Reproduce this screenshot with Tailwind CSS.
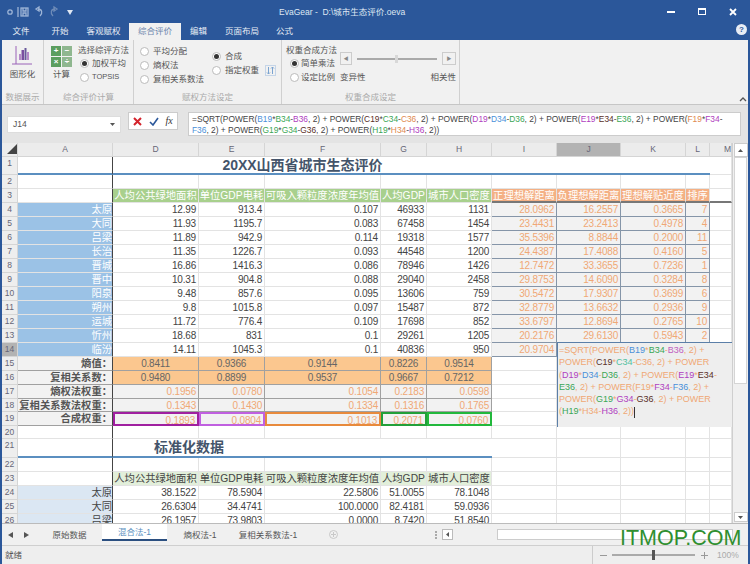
<!DOCTYPE html>
<html lang="zh-CN">
<head>
<meta charset="UTF-8">
<title>EvaGear</title>
<script src="https://cdn.jsdelivr.net/npm/@tailwindcss/browser@4"></script>
</head>
<body class="w-[750px] h-[564px] overflow-hidden bg-[#f1f1f1] text-[#555] font-['Liberation_Sans','Noto_Sans_CJK_SC',sans-serif]">
<div class="relative flex flex-col w-[750px] h-[564px] overflow-hidden border-x-2 border-[#2b579a]">

  <!-- title bar -->
  <div class="-mx-[2px] h-[23px] shrink-0 bg-[#2b579a] flex items-center text-white">
    <svg class="shrink-0" width="76" height="14" viewBox="0 0 76 14" fill="none" stroke="#9db4d6" stroke-width="1.3">
      <circle cx="10" cy="7" r="2.2"/>
      <path d="M18 2v10"/>
      <rect x="21" y="3" width="7" height="8"/><path d="M23 3v3h3V3M23 11V8h3v3"/>
      <path d="M36 4l3-2v4zM38 4c4 0 5 4 2 7"/>
      <path d="M57 4l-3-2v4zM55 4c-4 0-5 4-2 7" stroke="#6f8cb8"/>
      <path d="M67 5h6l-3 5z" fill="#dfe7f3" stroke="none"/>
    </svg>
    <div class="ml-[203px] text-[8.5px] leading-[16px] text-[#dfe7f3] whitespace-nowrap">EvaGear -&nbsp; D:\城市生态评价.oeva</div>
    <div class="ml-auto w-[8px] h-[2px] bg-white"></div>
    <div class="ml-[23px] w-[8px] h-[7px] border border-white border-t-2"></div>
    <svg class="ml-[23px] mr-[13px]" width="8" height="8" viewBox="0 0 8 8" stroke="#fff" stroke-width="1.8"><path d="M1 1l6 6M7 1l-6 6"/></svg>
  </div>

  <!-- menu tabs -->
  <div class="-mx-[2px] h-[17px] shrink-0 bg-[#2b579a] flex items-center text-[8.5px] leading-[17px] text-[#e8edf5]">
    <div class="w-[42px] text-center">文件</div>
    <div class="w-[36px] text-center">开始</div>
    <div class="w-[51px] text-center">客观赋权</div>
    <div class="w-[52px] h-[17px] text-center bg-[#f1f1f1] text-[#6d86ad]">综合评价</div>
    <div class="w-[35px] text-center">编辑</div>
    <div class="w-[52px] text-center">页面布局</div>
    <div class="w-[33px] text-center">公式</div>
    <div class="ml-auto mr-[3px] -mt-[5px] w-[11px] h-[11px] rounded-full bg-[#e8edf5] text-[#2b579a] text-[8px] leading-[11px] font-bold text-center">?</div>
  </div>

  <!-- ribbon -->
  <div class="h-[65px] shrink-0 bg-[#f1f1f1] flex border-b border-[#c6c6c6] text-[8.5px] leading-[12px]">
    <div class="w-[42px] flex flex-col items-center border-r border-[#d0d0d0]">
      <div class="flex-1 flex flex-col items-center pt-[6px]">
        <svg width="20" height="19" viewBox="0 0 20 19"><path d="M4 0v18M0 18h20" stroke="#9a63b8" stroke-width="1" fill="none"/><rect x="7" y="8" width="2" height="6" fill="#b58ac9"/><rect x="9.500" y="4" width="2.500" height="10" fill="#7a4fa0"/><rect x="12.500" y="2" width="2" height="12" fill="#6a5a9c"/><rect x="15" y="6" width="2" height="8" fill="#b58ac9"/></svg>
        <div class="mt-[3px]">图形化</div>
      </div>
      <div class="h-[13px] text-[#aaa]">数据展示</div>
    </div>

    <div class="w-[90px] flex flex-col border-r border-[#d0d0d0]">
      <div class="flex-1 flex pl-[7px]">
        <div class="w-[21px] pt-[6px] flex flex-col items-center">
          <div class="grid grid-cols-2 gap-[1px] w-[21px] text-white text-[8px] leading-[10px] text-center font-bold">
            <div class="h-[10px] bg-[#5b9e5f]">+</div><div class="h-[10px] bg-[#8fb78f]">−</div>
            <div class="h-[10px] bg-[#5b9e5f]">×</div><div class="h-[10px] bg-[#8fb78f]">÷</div>
          </div>
          <div class="mt-[1px]">计算</div>
        </div>
        <div class="ml-[6px] pt-[4px] whitespace-nowrap">
          <div>选择综评方法</div>
          <div class="ml-[2px] flex items-center gap-[3px] h-[14px]"><span class="w-[9px] h-[9px] rounded-full border border-[#bbb] bg-white flex items-center justify-center"><span class="w-[5px] h-[5px] rounded-full bg-[#333]"></span></span>加权平均</div>
          <div class="ml-[2px] flex items-center gap-[3px] h-[14px]"><span class="w-[9px] h-[9px] rounded-full border border-[#bbb] bg-white"></span><span class="text-[7.5px]">TOPSIS</span></div>
        </div>
      </div>
      <div class="h-[13px] text-center text-[#aaa]">综合评价计算</div>
    </div>

    <div class="w-[148px] flex flex-col border-r border-[#d0d0d0]">
      <div class="flex-1 flex pl-[6px] whitespace-nowrap">
        <div class="w-[72px] pt-[4px]">
          <div class="flex items-center gap-[4px] h-[14px]"><span class="w-[9px] h-[9px] rounded-full border border-[#bbb] bg-white"></span>平均分配</div>
          <div class="flex items-center gap-[4px] h-[14px]"><span class="w-[9px] h-[9px] rounded-full border border-[#bbb] bg-white"></span>熵权法</div>
          <div class="flex items-center gap-[4px] h-[14px]"><span class="w-[9px] h-[9px] rounded-full border border-[#bbb] bg-white"></span>复相关系数法</div>
        </div>
        <div class="pt-[9px]">
          <div class="flex items-center gap-[4px] h-[14px]"><span class="w-[9px] h-[9px] rounded-full border border-[#bbb] bg-white flex items-center justify-center"><span class="w-[5px] h-[5px] rounded-full bg-[#333]"></span></span>合成</div>
          <div class="flex items-center gap-[4px] h-[14px]"><span class="w-[9px] h-[9px] rounded-full border border-[#bbb] bg-white"></span>指定权重
            <svg class="ml-[2px]" width="11" height="11" viewBox="0 0 11 11" fill="none" stroke="#7aa3d0"><rect x="0.500" y="0.500" width="10" height="10" stroke="#c5d5e8"/><path d="M3.500 2v7M2 7.500l1.500 1.500L5 7.500M7.500 9V2M6 3.500L7.500 2 9 3.500"/></svg>
          </div>
        </div>
      </div>
      <div class="h-[13px] text-center text-[#aaa]">赋权方法设定</div>
    </div>

    <div class="w-[178px] flex flex-col border-r border-[#d0d0d0]">
      <div class="flex-1 flex whitespace-nowrap">
        <div class="w-[58px] pl-[4px] pt-[4px]">
          <div>权重合成方法</div>
          <div class="ml-[4px] flex items-center gap-[2px] h-[14px]"><span class="w-[9px] h-[9px] rounded-full border border-[#bbb] bg-white flex items-center justify-center"><span class="w-[5px] h-[5px] rounded-full bg-[#333]"></span></span>简单乘法</div>
          <div class="ml-[4px] flex items-center gap-[2px] h-[14px]"><span class="w-[9px] h-[9px] rounded-full border border-[#bbb] bg-white"></span>设定比例</div>
        </div>
        <div class="w-[116px] pt-[12px]">
          <div class="flex items-center h-[13px]">
            <div class="w-[12px] h-[13px] border border-[#ccc] text-[#888] text-[5px] leading-[11px] text-center">◀</div>
            <div class="relative flex-1 mx-[5px] h-[2px] bg-[#aaa]"><div class="absolute left-[38px] -top-[3px] w-[3px] h-[8px] bg-[#d8d8d8]"></div></div>
            <div class="w-[14px] h-[13px] border border-[#ccc] text-[#888] text-[5px] leading-[11px] text-center">▶</div>
          </div>
          <div class="mt-[5px] flex justify-between leading-[14px]"><span>变异性</span><span>相关性</span></div>
        </div>
      </div>
      <div class="h-[13px] text-center text-[#aaa]">权重合成设定</div>
    </div>

    <div class="flex-1 flex items-end justify-end pr-[1px] pb-[2px]">
      <svg width="8" height="6" viewBox="0 0 8 6" fill="none" stroke="#555" stroke-width="1.300"><path d="M1 5l3-3 3 3"/></svg>
    </div>
  </div>

  <!-- formula bar -->
  <div class="h-[38px] shrink-0 bg-[#e4e4e4] flex items-start pl-[5px]">
    <div class="mt-[11px] w-[114px] h-[17px] bg-white border border-[#ddd] text-[8.5px] leading-[15px] pl-[5px] pr-[5px] flex justify-between"><span>J14</span><svg class="mt-[6px]" width="5" height="3" viewBox="0 0 5 3"><path d="M0 0h5L2.500 3z" fill="#555"/></svg></div>
    <div class="ml-[7px] mt-[7px] w-[50px] h-[18px] bg-white border border-[#ccc] flex items-center justify-around px-[1px]">
      <svg width="9" height="9" viewBox="0 0 9 9" stroke="#d4232c" stroke-width="2"><path d="M1 1l7 7M8 1l-7 7"/></svg>
      <svg width="10" height="9" viewBox="0 0 10 9" fill="none" stroke="#2b579a" stroke-width="1.600"><path d="M1 5l3 3 5-7"/></svg>
      <span class="font-['Liberation_Serif'] italic text-[10px] leading-[12px] text-[#333]">fx</span>
    </div>
    <div class="ml-[10px] mt-[7px] w-[553px] h-[24px] bg-white border border-[#ccc] pl-[3px] pt-[1px] text-[8.4px] leading-[11px] text-[#444] whitespace-nowrap overflow-hidden">
      <div>=SQRT(POWER(<span class="text-[#4a90d9]">B19</span>*<span class="text-[#3aa655]">B34</span>-<span class="text-[#b040c0]">B36</span>, 2) + POWER(<span class="text-[#5a3028]">C19</span>*<span class="text-[#3aa655]">C34</span>-<span class="text-[#e08a50]">C36</span>, 2) + POWER(<span class="text-[#b040c0]">D19</span>*<span class="text-[#4a90d9]">D34</span>-<span class="text-[#3aa655]">D36</span>, 2) + POWER(<span class="text-[#b040c0]">E19</span>*<span class="text-[#5a3028]">E34</span>-<span class="text-[#3aa655]">E36</span>, 2) + POWER(<span class="text-[#e08a50]">F19</span>*<span class="text-[#b040c0]">F34</span>-</div>
      <div><span class="text-[#4a90d9]">F36</span>, 2) + POWER(<span class="text-[#3aa655]">G19</span>*<span class="text-[#3aa655]">G34</span>-<span class="text-[#5a3028]">G36</span>, 2) + POWER(<span class="text-[#3aa655]">H19</span>*<span class="text-[#e08a50]">H34</span>-<span class="text-[#b040c0]">H36</span>, 2))</div>
    </div>
  </div>

  <!-- sheet + vertical scrollbar -->
  <div class="h-[380px] shrink-0 flex bg-white overflow-hidden">
    <div class="relative w-[730px] overflow-hidden">
      <div id="sheet" class="grid grid-cols-[16px_95px_86px_66px_116px_46px_65px_65px_64px_65px_24px_22px] grid-rows-[14px_18px_14px_14px_14px_14px_14px_14px_14px_14px_14px_14px_14px_14px_14px_14px_14px_14px_13px_14px_13px_19px_14px_14px_14px_14px_14px]"></div>
      <!-- cell editor open on J14 -->
      <div class="absolute left-[555px] top-[199px] w-[175px] h-[85px] bg-[#eeeeee] border-l border-t border-[#5b7fa8] pl-[1px] pt-[1px] text-[9px] leading-[12.3px] text-[#f0a875] whitespace-nowrap">
        <div>=SQRT(POWER(<span class="text-[#4a90d9]">B19</span>*<span class="text-[#3aa655]">B34</span>-<span class="text-[#c060c0]">B36</span>, 2) +</div>
        <div>POWER(<span class="text-[#5a3028]">C19</span>*<span class="text-[#50c0a0]">C34</span>-C36, 2) + POWER</div>
        <div>(<span class="text-[#b040c0]">D19</span>*<span class="text-[#4a90d9]">D34</span>-<span class="text-[#3aa655]">D36</span>, 2) + POWER(<span class="text-[#b040c0]">E19</span>*<span class="text-[#5a3028]">E34</span>-</div>
        <div><span class="text-[#3aa655]">E36</span>, 2) + POWER(F19*<span class="text-[#b040c0]">F34</span>-<span class="text-[#4a90d9]">F36</span>, 2) +</div>
        <div>POWER(<span class="text-[#3aa655]">G19</span>*<span class="text-[#b040c0]">G34</span>-<span class="text-[#5a3028]">G36</span>, 2) + POWER</div>
        <div>(<span class="text-[#3aa655]">H19</span>*H34-<span class="text-[#b040c0]">H36</span>, 2))<span class="inline-block w-[1px] h-[11px] bg-[#333] align-middle"></span></div>
      </div>
    </div>
    <div class="w-[16px] bg-[#f0f0f0] border-l border-[#cfcfcf] flex flex-col items-center">
      <div class="w-[14px] h-[14px] bg-white border border-[#ccc] flex items-center justify-center"><svg width="5" height="3" viewBox="0 0 5 3"><path d="M0 3h5L2.500 0z" fill="#555"/></svg></div>
      <div class="w-[13px] h-[227px] bg-white border border-[#d5d5d5]"></div>
      <div class="flex-1"></div>
      <div class="w-[14px] h-[10px] mb-[1px] bg-white border border-[#ccc] flex items-center justify-center"><svg width="5" height="3" viewBox="0 0 5 3"><path d="M0 0h5L2.500 3z" fill="#555"/></svg></div>
    </div>
  </div>

  <!-- sheet tabs -->
  <div class="h-[22px] shrink-0 bg-[#f0f0f0] border-t border-[#bbb] flex items-center text-[8.5px] leading-[12px] text-[#555] whitespace-nowrap">
    <svg class="ml-[6px]" width="5" height="6" viewBox="0 0 5 6"><path d="M5 0v6L0 3z" fill="#555"/></svg>
    <svg class="ml-[11px]" width="5" height="6" viewBox="0 0 5 6"><path d="M0 0v6l5-3z" fill="#555"/></svg>
    <div class="w-[65px] ml-[8px] text-center">原始数据</div>
    <div class="w-[65px] h-[17px] self-start leading-[16px] text-center bg-white text-[#5b8fc0] border-b-2 border-[#2b4f80]">混合法-1</div>
    <div class="w-[66px] text-center">熵权法-1</div>
    <div class="w-[70px] text-center">复相关系数法-1</div>
    <svg class="ml-[26px] shrink-0" width="9" height="9" viewBox="0 0 9 9" fill="none" stroke="#c8c8c8"><circle cx="4.500" cy="4.500" r="4"/><path d="M4.500 2v5M2 4.500h5"/></svg>
    <div class="ml-[97px] w-[2px] h-[8px] border-l-2 border-dotted border-[#aaa]"></div>
    <div class="ml-[5px] w-[11px] h-[11px] bg-white border border-[#bbb] flex items-center justify-center"><svg width="3" height="5" viewBox="0 0 3 5"><path d="M3 0v5L0 2.500z" fill="#555"/></svg></div>
    <div class="ml-[44px] w-[236px] h-[11px] bg-white border border-[#ccc]"></div>
  </div>

  <!-- status bar -->
  <div class="flex-1 bg-[#eeeeee] border-t border-[#cfcfcf] text-[8.5px] flex items-center pl-[3px]">
    <span>就绪</span>
    <div class="ml-auto w-[156px] h-full border-l border-[#ccc] flex items-center">
      <div class="ml-[7px] w-[7px] h-[1px] bg-[#999]"></div>
      <div class="relative ml-[5px] w-[83px] h-[2px] bg-[#aaa]"><div class="absolute left-[40px] -top-[4px] w-[3px] h-[10px] bg-[#555]"></div></div>
      <svg class="ml-[6px]" width="7" height="7" viewBox="0 0 7 7" stroke="#999"><path d="M3.500 0v7M0 3.500h7"/></svg>
      <span class="ml-[9px] text-[#aaa]">100%</span>
    </div>
  </div>

  <!-- watermark lying over the bottom right corner -->
  <div class="absolute left-[618px] top-[526px] text-[21.5px] leading-[24px] text-[#2f8f2f] whitespace-nowrap">ITMOP.COM</div>
</div>

<script>
  const cities = ["太原","大同","吕梁","长治","晋城","晋中","阳泉","朔州","运城","忻州","临汾"];
  const raw = [
    ["12.99","913.4","0.107","46933","1131","28.0962","16.2557","0.3665","7"],
    ["11.93","1195.7","0.083","67458","1454","23.4431","23.2413","0.4978","4"],
    ["11.89","942.9","0.114","19318","1577","35.5396","8.8844","0.2000","11"],
    ["11.35","1226.7","0.093","44548","1200","24.4387","17.4088","0.4160","5"],
    ["16.86","1416.3","0.086","78946","1426","12.7472","33.3655","0.7236","1"],
    ["10.31","904.8","0.088","29040","2458","29.8753","14.6090","0.3284","8"],
    ["9.48","857.6","0.095","13606","759","30.5472","17.9307","0.3699","6"],
    ["9.8","1015.8","0.097","15487","872","32.8779","13.6632","0.2936","9"],
    ["11.72","776.4","0.109","17698","852","33.6797","12.8694","0.2765","10"],
    ["18.68","831","0.1","29261","1205","20.2176","29.6130","0.5943","2"],
    ["14.11","1045.3","0.1","40836","950","20.9704","","",""],
  ];
  const heads = ["人均公共绿地面积","单位GDP电耗","可吸入颗粒度浓度年均值","人均GDP","城市人口密度"];
  const heads2 = ["正理想解距离","负理想解距离","理想解贴近度","排序"];
  const weights = {
    15: ["熵值：", "0.8411","0.9366","0.9144","0.8226","0.9514"],
    16: ["复相关系数：", "0.9480","0.8899","0.9537","0.9667","0.7212"],
    17: ["熵权法权重：", "0.1956","0.0780","0.1054","0.2183","0.0598"],
    18: ["复相关系数法权重：", "0.1343","0.1430","0.1334","0.1316","0.1765"],
    19: ["合成权重：", "0.1893","0.0804","0.1013","0.2071","0.0760"],
  };
  const norm = {
    24: ["太原","38.1522","78.5904","22.5806","51.0055","78.1048"],
    25: ["大同","26.6304","34.4741","100.0000","82.4181","59.0936"],
    26: ["吕梁","26.1957","73.9803","0.0000","8.7420","51.8540"],
  };
  const box19 = ["", "border-2 border-[#a020a0]", "border-2 border-[#c060e0]", "border-2 border-[#e88a3c]", "border-2 border-[#22a03a]", "border-2 border-[#22b83c]"];

  // no border colour here: each cell adds exactly one, or two of them would fight
  const base = "min-w-0 overflow-hidden whitespace-nowrap leading-[13px] ";
  const grid = "border-r border-b border-[#e3e3e3] ";
  const num = "text-[10px] tracking-[-0.2px] text-right pr-[2px] ";
  const cjk = "text-[10.3px] ";
  const hdr = "border-r border-b border-[#d5d5d5] text-[#667] text-[8.5px] leading-[13px] text-center ";
  const colA = "border-r-[#444] ";

  const cell = (t, k) => '<div class="' + k + '">' + t + '</div>';

  let html = cell('<svg width="10" height="10" viewBox="0 0 10 10"><path d="M10 0v10H0z" fill="#444"/></svg>', "bg-[#ececec] border-b border-r border-[#d5d5d5] pl-[5px] pt-[1px]");
  ["A","D","E","F","G","H","I"].forEach((l) => { html += cell(l, hdr + "bg-[#ececec]"); });
  html += cell("J", hdr + "bg-[#b3b3b3]");
  html += cell("K", hdr + "bg-[#ececec]");
  html += cell("L", hdr + "bg-[#ececec]");
  html += cell("M", hdr + "bg-[#ececec] text-right overflow-hidden");

  for (let n = 1; n <= 26; n++) {
    html += cell(n, hdr + (n === 14 ? "bg-[#b3b3b3]" : "bg-[#eeeeee]"));

    if (n === 1) {
      html += cell("", base + grid + colA + "border-b-2 border-b-[#5b8fc0]");
      html += cell("20XX山西省城市生态评价", "col-span-5 border-b-2 border-[#5b8fc0] text-[14px] leading-[16px] font-bold text-[#44546a] text-center");
      html += cell("", "col-span-4 border-b-2 border-[#5b8fc0]");
      html += cell("", base + grid);
      continue;
    }
    if (n === 21) {
      html += cell("", base + grid + colA + "border-b-2 border-b-[#5b8fc0]");
      html += cell("标准化数据", "col-span-2 border-b-2 border-[#5b8fc0] text-[14px] leading-[17px] font-bold text-[#44546a] text-center");
      html += cell("", "col-span-3 border-b-2 border-[#5b8fc0]");
      for (let c = 0; c < 5; c++) html += cell("", base + grid);
      continue;
    }

    for (let c = 0; c < 11; c++) {
      let t = "", k = base + (c === 0 ? colA : "");
      if (n >= 4 && n <= 14) {
        const r = raw[n - 4];
        if (c === 0) { t = cities[n - 4]; k += grid + cjk + "bg-[#9bc2e6] text-white text-right"; }
        else if (c <= 5) { t = r[c - 1]; k += grid + num + "text-[#444]"; }
        else if (c <= 9) { t = r[c - 1]; k += "border-r border-b border-[#8595a8] " + num + "text-[#f0a875] bg-[#f2f2f2]"; }
        else k += grid;
      } else if (n === 3) {
        if (c >= 1 && c <= 5) { t = heads[c - 1]; k += grid + cjk + "bg-[#a8d08d] text-white text-center"; }
        else if (c >= 6 && c <= 9) { t = heads2[c - 6]; k += grid + cjk + "bg-[#f4b084] text-white text-center border-b-2 border-b-[#777]"; }
        else if (c === 10) k += grid + "border-b-2 border-b-[#777]";
        else k += grid;
      } else if (n === 23) {
        k += grid;
        if (c >= 1 && c <= 5) { t = heads[c - 1]; k += cjk + "bg-[#e2efda] text-[#444] text-center"; }
      } else if (weights[n]) {
        if (c === 0) { t = weights[n][0]; k += grid + cjk + "bg-[#f2f2f2] text-right font-bold text-[#555] border-b-[#a0a0a0]"; }
        else if (c <= 5) {
          t = weights[n][c];
          if (n <= 16) k += "border-r border-b border-[#a0a0a0] text-[10px] tracking-[-0.2px] bg-[#fbc78f] text-[#666] text-center";
          else if (n === 19) k += box19[c] + " leading-[10px] " + num + "bg-[#f2f2f2] text-[#f0a875]";
          else k += "border-r border-b border-[#a0a0a0] " + num + "bg-[#f2f2f2] text-[#f0a875]";
        } else k += grid;
      } else if (norm[n]) {
        k += grid;
        if (c === 0) { t = norm[n][0]; k += cjk + "bg-[#dbe7f3] text-[#444] text-right"; }
        else if (c <= 5) { t = norm[n][c]; k += num + "text-[#444]"; }
      } else {
        k += grid;
      }
      html += cell(t, k);
    }
  }
  document.getElementById("sheet").innerHTML = html;
</script>
</body>
</html>
